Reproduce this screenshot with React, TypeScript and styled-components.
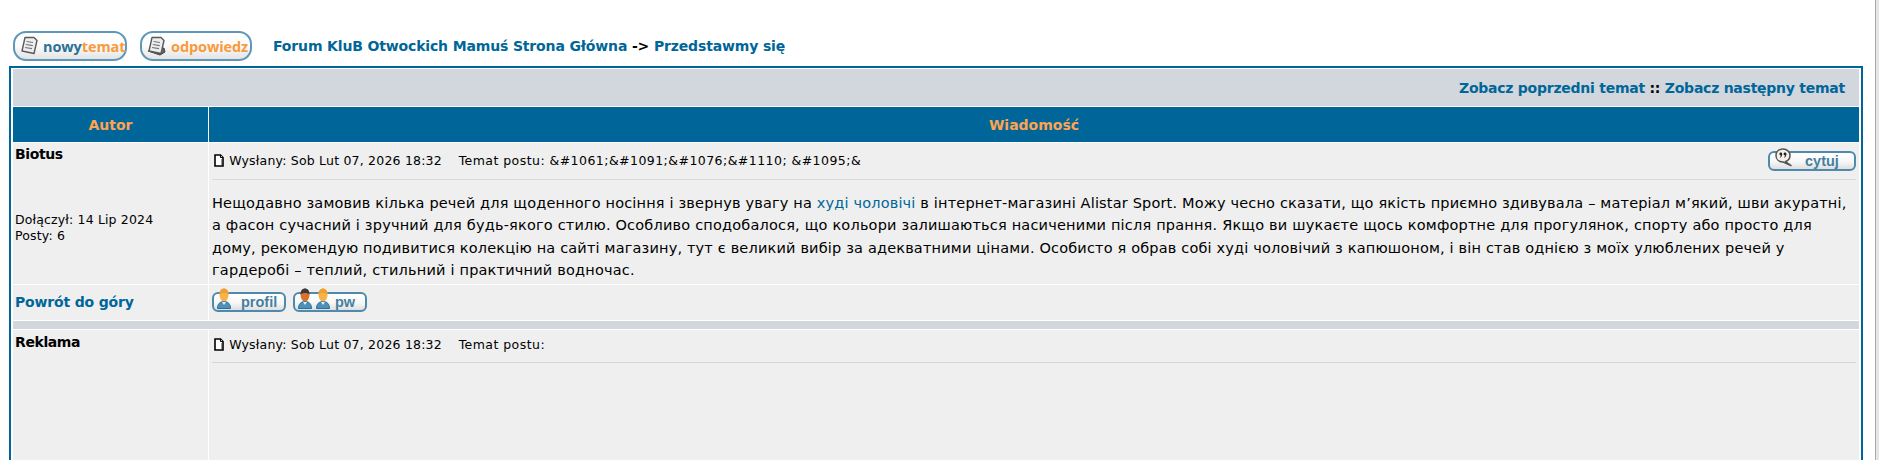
import React from "react";
import styled, { createGlobalStyle } from "styled-components";

const Global = createGlobalStyle`
  html, body { margin: 0; padding: 0; background: #fff; overflow: hidden; height: 460px; }
  body { font-family: "DejaVu Sans", Verdana, sans-serif; color: #000; }
`;

const Page = styled.div`
  width: 1854px;
  margin-left: 9px;
  padding-top: 31px;
`;

const ScrollEdge = styled.div`
  position: fixed;
  top: 0;
  right: 0;
  bottom: 0;
  width: 4px;
  box-sizing: border-box;
  border-left: 1px solid #a3adb6;
  background: #e6e6e6;
`;

const TopBar = styled.div`
  display: flex;
  align-items: center;
  height: 30px;
  margin-bottom: 5px;
`;

const ImageButton = styled.span<{ $w: number; $ml: number; $gap: number; $ls: number }>`
  box-sizing: border-box;
  display: flex;
  align-items: center;
  width: ${(p) => p.$w}px;
  height: 30px;
  margin-left: ${(p) => p.$ml}px;
  border: 2px solid #5d97ba;
  border-radius: 13px;
  background: linear-gradient(#ffffff 0%, #fbfbfb 50%, #e4e4e4 100%);
  font-family: "Open Sans", Arial, sans-serif;
  font-weight: 700;
  font-size: 14.5px;
  letter-spacing: ${(p) => p.$ls}px;
  padding-left: 5px;
  gap: ${(p) => p.$gap}px;
  white-space: nowrap;
  svg { flex: none; }
`;

const Blue = styled.span`color: #2b7197;`;
const Orange = styled.span`color: #f99a3c;`;

const Nav = styled.span`
  margin-left: 21px;
  font-size: 14px;
  font-weight: 700;
  letter-spacing: -0.15px;
  color: #000;
`;

const NavLink = styled.a`
  color: #006699;
`;

const ForumTable = styled.table`
  width: 1854px;
  table-layout: fixed;
  padding: 0 1px;
  border: 2px solid #006699;
  border-collapse: separate;
  border-spacing: 1px;
  background: #fff;
`;

const CatHead = styled.td`
  height: 37px;
  padding: 0 14px 0 0;
  background: #d1d7dc;
  text-align: right;
  font-size: 14px;
  font-weight: 700;
  letter-spacing: -0.25px;
`;

const Th = styled.th`
  height: 35px;
  padding: 0;
  background: #006699;
  color: #ffa34f;
  font-size: 14px;
  font-weight: 700;
`;

const Side = styled.td<{ $top: number }>`
  padding: ${(p) => p.$top}px 2px 0;
  background: #efefef;
  vertical-align: top;
`;

const Main = styled.td<{ $h?: number }>`
  padding: 0 3px;
  height: ${(p) => (p.$h ? `${p.$h}px` : "auto")};
  background: #efefef;
  vertical-align: top;
`;

const Name = styled.div`
  font-size: 14px;
  font-weight: 700;
  letter-spacing: -0.4px;
  line-height: 17px;
`;

const Details = styled.div`
  margin-top: 49px;
  font-size: 12.5px;
  letter-spacing: 0.15px;
  line-height: 16px;
`;

const TopBack = styled.td`
  height: 35px;
  padding: 0 2px;
  background: #efefef;
  font-size: 14px;
  font-weight: 700;
  letter-spacing: -0.17px;
  color: #006699;
`;

const ActionCell = styled.td`
  height: 35px;
  padding: 0 3px;
  background: #efefef;
`;

const Actions = styled.div`
  display: flex;
  gap: 7px;
`;

const Spacer = styled.td`
  height: 8px;
  padding: 0;
  background: #d1d7dc;
`;

const MetaRow = styled.div<{ $h: number; $rule: string }>`
  display: flex;
  align-items: center;
  justify-content: space-between;
  height: ${(p) => p.$h}px;
  border-bottom: 1px solid ${(p) => p.$rule};
  font-size: 12.5px;
  letter-spacing: 0.2px;
  white-space: pre;
`;

const Meta = styled.span`
  display: flex;
  align-items: center;
  gap: 1px;
  padding-left: 2px;
  margin-top: -2px;
`;

const Subject = styled.span`
  letter-spacing: 0.45px;
`;

const Body = styled.div`
  margin-top: 12px;
  margin-bottom: 2px;
  font-size: 14.5px;
  line-height: 22.4px;
  white-space: nowrap;
`;

const Line = styled.span<{ $ls: number }>`
  display: block;
  letter-spacing: ${(p) => p.$ls}px;
`;

const PostLink = styled.a`
  color: #006699;
`;

const SmallButton = styled.span<{ $w: number; $pl: number }>`
  box-sizing: border-box;
  position: relative;
  display: block;
  width: ${(p) => p.$w}px;
  height: 20px;
  border: 2px solid #4f8aad;
  border-radius: 6px;
  background: linear-gradient(#ffffff 0%, #f7f7f7 55%, #dedede 100%);
  font-family: "Liberation Sans", Arial, sans-serif;
  font-weight: 700;
  font-size: 14.5px;
  letter-spacing: 0;
  line-height: 16px;
  color: #45809f;
  padding-left: ${(p) => p.$pl}px;
`;

const Overlay = styled.span<{ $l: number; $t: number }>`
  position: absolute;
  left: ${(p) => p.$l}px;
  top: ${(p) => p.$t}px;
  display: block;
  line-height: 0;
`;

const DocIcon = () => (
  <svg width="10" height="13" viewBox="0 0 10 13">
    <path d="M1 1h5.500L9 3.500V12H1z" fill="#fff" stroke="#000" strokeWidth="1.6" />
    <path d="M6.500 1v2.500H9" fill="#ccc" stroke="#000" strokeWidth="1" />
    <path d="M7.500 5v6" stroke="#999" strokeWidth="1" />
  </svg>
);

const SheetIcon = ({ stacked }: { stacked?: boolean }) => (
  <svg width={stacked ? 21 : 19} height="20" viewBox={stacked ? "0 0 21 20" : "0 0 19 20"}>
    {stacked && <path d="M1 15l12 4 5-3-1-4z" fill="#666" stroke="#444" strokeWidth="1" />}
    <path d="M5 1.500h9l3 3-3 13-12-2.500z" fill="#eceff0" stroke="#5a5a5a" strokeWidth="1.4" strokeLinejoin="round" />
    <path d="M6.500 5.500l6.500 1M5.800 8.500l7 1.200M5 11.500l7 1.200" stroke="#777" strokeWidth="1.2" />
  </svg>
);

const Person = ({ head = "#f7b24a", hair = "#f0a030" }: { head?: string; hair?: string }) => (
  <svg width="14" height="21" viewBox="0 0 14 21">
    <path d="M.5 20.500c0-4.500 2.500-7 6.500-7s6.500 2.500 6.500 7z" fill="#4d90ba" stroke="#2d6f98" strokeWidth="1" />
    <path d="M5 14l2 3 2-3z" fill="#e6eff4" />
    <ellipse cx="7" cy="7" rx="4.500" ry="6.500" fill={head} />
    <path d="M2.500 6.500C2.500 2.500 4.500.5 7 .5s4.500 2 4.500 6C9.500 4.500 4.500 4.500 2.500 6.500z" fill={hair} />
  </svg>
);

const Quote = () => (
  <svg width="18" height="19" viewBox="0 0 18 19">
    <path d="M8 1c4 0 7 2.800 7 6.500 0 3-2 5.200-4.500 6l5.500 4-8-3.500C4 14 1 11.500 1 7.500S4 1 8 1z" fill="#f3f1e8" stroke="#555" strokeWidth="1.5" strokeLinejoin="round" />
    <circle cx="5.800" cy="6" r="1.400" fill="#222" />
    <circle cx="10" cy="6" r="1.400" fill="#222" />
    <path d="M6.800 6.500l-1.300 3M11 6.500l-1.300 3" stroke="#222" strokeWidth="1" />
  </svg>
);

export default function App() {
  return (
    <>
      <Global />
      <ScrollEdge />
      <Page>
        <TopBar>
          <ImageButton $w={114} $ml={4} $gap={4} $ls={-0.1}>
            <SheetIcon />
            <span><Blue>nowy</Blue><Orange>temat</Orange></span>
          </ImageButton>
          <ImageButton $w={112} $ml={13} $gap={3} $ls={-0.1}>
            <SheetIcon stacked />
            <Orange>odpowiedz</Orange>
          </ImageButton>
          <Nav>
            <NavLink>Forum KluB Otwockich Mamuś Strona Główna</NavLink> -&gt; <NavLink>Przedstawmy się</NavLink>
          </Nav>
        </TopBar>
        <ForumTable>
          <colgroup>
            <col style={{ width: 195 }} />
            <col />
          </colgroup>
          <tbody>
            <tr>
              <CatHead colSpan={2}>
                <NavLink>Zobacz poprzedni temat</NavLink> :: <NavLink>Zobacz następny temat</NavLink>
              </CatHead>
            </tr>
            <tr>
              <Th>Autor</Th>
              <Th>Wiadomość</Th>
            </tr>
            <tr>
              <Side $top={3}>
                <Name>Biotus</Name>
                <Details>
                  Dołączył: 14 Lip 2024
                  <br />
                  Posty: 6
                </Details>
              </Side>
              <Main>
                <MetaRow $h={36} $rule="#d9d9d9">
                  <Meta>
                    <DocIcon />
                    <span>
                      {" Wysłany: Sob Lut 07, 2026 18:32    "}
                      <Subject>{"Temat postu: &#1061;&#1091;&#1076;&#1110; &#1095;&"}</Subject>
                    </span>
                  </Meta>
                  <SmallButton $w={88} $pl={35}>
                    <Overlay $l={5} $t={-5}><Quote /></Overlay>
                    cytuj
                  </SmallButton>
                </MetaRow>
                <Body>
                  <Line $ls={0.17}>
                    Нещодавно замовив кілька речей для щоденного носіння і звернув увагу на <PostLink>худі чоловічі</PostLink> в інтернет-магазині Alistar Sport. Можу чесно сказати, що якість приємно здивувала – матеріал м’який, шви акуратні,
                  </Line>
                  <Line $ls={0.19}>
                    а фасон сучасний і зручний для будь-якого стилю. Особливо сподобалося, що кольори залишаються насиченими після прання. Якщо ви шукаєте щось комфортне для прогулянок, спорту або просто для
                  </Line>
                  <Line $ls={0.17}>
                    дому, рекомендую подивитися колекцію на сайті магазину, тут є великий вибір за адекватними цінами. Особисто я обрав собі худі чоловічий з капюшоном, і він став однією з моїх улюблених речей у
                  </Line>
                  <Line $ls={0.19}>
                    гардеробі – теплий, стильний і практичний водночас.
                  </Line>
                </Body>
              </Main>
            </tr>
            <tr>
              <TopBack>Powrót do góry</TopBack>
              <ActionCell>
                <Actions>
                  <SmallButton $w={74} $pl={27}>
                    <Overlay $l={3} $t={-6}><Person /></Overlay>
                    profil
                  </SmallButton>
                  <SmallButton $w={74} $pl={40}>
                    <Overlay $l={3} $t={-6}><Person head="#d9722c" hair="#3a3a3a" /></Overlay>
                    <Overlay $l={21} $t={-6}><Person /></Overlay>
                    pw
                  </SmallButton>
                </Actions>
              </ActionCell>
            </tr>
            <tr>
              <Spacer colSpan={2} />
            </tr>
            <tr>
              <Side $top={4}><Name>Reklama</Name></Side>
              <Main $h={200}>
                <MetaRow $h={32} $rule="#d1d7dc">
                  <Meta>
                    <DocIcon />
                    <span>
                      {" Wysłany: Sob Lut 07, 2026 18:32    "}
                      <Subject>Temat postu:</Subject>
                    </span>
                  </Meta>
                </MetaRow>
              </Main>
            </tr>
          </tbody>
        </ForumTable>
      </Page>
    </>
  );
}
